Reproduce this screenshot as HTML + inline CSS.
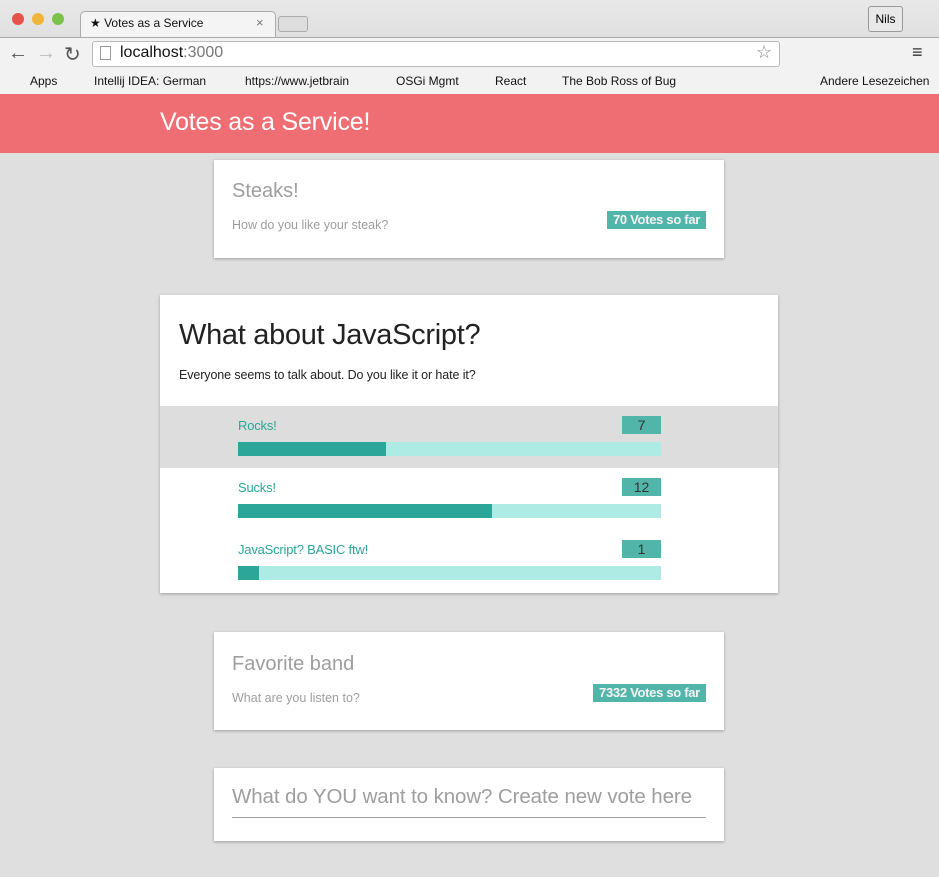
<!DOCTYPE html>
<html><head><meta charset="utf-8"><style>
*{margin:0;padding:0;box-sizing:border-box}
body{width:939px;height:877px;overflow:hidden;background:#dfdfdf;font-family:"Liberation Sans",Arial,sans-serif;position:relative}
.a{position:absolute;white-space:nowrap}
.chrome{left:0;top:0;width:939px;height:94px;background:linear-gradient(#e8e8e8,#d4d4d4)}
.card{position:absolute;background:#fff;box-shadow:0 1px 3px rgba(0,0,0,.3)}
.gt{color:#9e9e9e}
.badge{position:absolute;background:#52b5a9;color:#f4f4f4;font-size:13px;font-weight:bold;text-align:center;line-height:18px;white-space:nowrap;letter-spacing:-0.3px}
.bar{position:absolute;left:78px;width:423px;height:14px;background:#aeebe5}
.bar i{display:block;height:14px;background:#2ba698}
.lbl{position:absolute;left:78px;color:#2ba698;font-size:13px;letter-spacing:-0.2px}
.cnt{position:absolute;left:462px;width:39px;height:18px;background:#52b5a9;color:#333;font-size:14px;text-align:center;line-height:18px}
</style></head><body>
<div class="a chrome"></div>
<div class="a" style="left:12px;top:13px;width:12px;height:12px;border-radius:50%;background:#e9514b"></div>
<div class="a" style="left:32px;top:13px;width:12px;height:12px;border-radius:50%;background:#f0b53a"></div>
<div class="a" style="left:52px;top:13px;width:12px;height:12px;border-radius:50%;background:#7cc24a"></div>
<div class="a" style="left:80px;top:11px;width:196px;height:27px;background:#f4f4f4;border:1px solid #aaa;border-bottom:none;border-radius:5px 5px 0 0"></div>
<div class="a" style="left:90px;top:16px;font-size:12px;color:#111">★ Votes as a Service</div>
<div class="a" style="left:256px;top:15px;font-size:13px;color:#777">×</div>
<div class="a" style="left:278px;top:16px;width:30px;height:16px;border:1px solid #aaa;border-radius:3px;background:#ddd"></div>
<div class="a" style="left:868px;top:6px;width:35px;height:26px;border:1px solid #999;border-radius:3px;font-size:12px;line-height:24px;text-align:center;background:#e8e8e8">Nils</div>
<div class="a" style="left:0;top:37px;width:939px;height:57px;background:#f2f2f2;border-top:1px solid #aaa"></div>
<div class="a" style="left:8px;top:42px;font-size:20px;color:#555">←</div>
<div class="a" style="left:36px;top:42px;font-size:20px;color:#bbb">→</div>
<div class="a" style="left:64px;top:42px;font-size:20px;color:#555">↻</div>
<div class="a" style="left:92px;top:41px;width:688px;height:26px;background:#fff;border:1px solid #bbb;border-radius:3px"></div>
<div class="a" style="left:100px;top:46px;width:11px;height:14px;border:1px solid #999;background:#fff"></div>
<div class="a" style="left:120px;top:44px;font-size:16px;color:#111">localhost<span style="color:#777">:3000</span></div>
<div class="a" style="left:756px;top:42px;font-size:18px;color:#888">☆</div>
<div class="a" style="left:912px;top:42px;font-size:18px;color:#333">≡</div>
<div class="a" style="left:0;top:72px;width:939px;font-size:12px;color:#111">
<span class="a" style="left:30px;top:2px">Apps</span><span class="a" style="left:94px;top:2px">Intellij IDEA: German</span><span class="a" style="left:245px;top:2px">https://www.jetbrain</span><span class="a" style="left:396px;top:2px">OSGi Mgmt</span><span class="a" style="left:495px;top:2px">React</span><span class="a" style="left:562px;top:2px">The Bob Ross of Bug</span><span class="a" style="left:820px;top:2px">Andere Lesezeichen</span></div>
<div class="a" style="left:0;top:94px;width:939px;height:59px;background:#ee6e73"></div>
<div class="a" style="left:160px;top:108px;font-size:25px;color:#fff;letter-spacing:-0.2px">Votes as a Service!</div>

<div class="card" style="left:214px;top:160px;width:510px;height:98px">
<div class="a gt" style="left:18px;top:20px;font-size:20px">Steaks!</div>
<div class="a gt" style="left:18px;top:58px;font-size:12.5px">How do you like your steak?</div>
<div class="badge" style="left:393px;top:51px;width:99px">70 Votes so far</div>
</div>

<div class="card" style="left:160px;top:295px;width:618px;height:298px">
<div class="a" style="left:19px;top:24px;font-size:29px;color:#222;letter-spacing:-0.3px">What about JavaScript?</div>
<div class="a" style="left:19px;top:73px;font-size:12.5px;color:#222;letter-spacing:-0.1px">Everyone seems to talk about. Do you like it or hate it?</div>
<div class="a" style="left:0;top:111px;width:618px;height:62px;background:#dddddd"></div>
<div class="lbl" style="top:123px">Rocks!</div><div class="cnt" style="top:121px">7</div>
<div class="bar" style="top:147px"><i style="width:148px"></i></div>
<div class="lbl" style="top:185px">Sucks!</div><div class="cnt" style="top:183px">12</div>
<div class="bar" style="top:209px"><i style="width:254px"></i></div>
<div class="lbl" style="top:247px">JavaScript? BASIC ftw!</div><div class="cnt" style="top:245px">1</div>
<div class="bar" style="top:271px"><i style="width:21px"></i></div>
</div>

<div class="card" style="left:214px;top:632px;width:510px;height:98px">
<div class="a gt" style="left:18px;top:21px;font-size:20px">Favorite band</div>
<div class="a gt" style="left:18px;top:59px;font-size:12.5px">What are you listen to?</div>
<div class="badge" style="left:379px;top:52px;width:113px">7332 Votes so far</div>
</div>

<div class="card" style="left:214px;top:768px;width:510px;height:73px">
<div class="a gt" style="left:18px;top:17px;font-size:20.5px;letter-spacing:-0.1px">What do YOU want to know? Create new vote here</div>
<div class="a" style="left:18px;top:49px;width:474px;height:1px;background:#9e9e9e"></div>
</div>
</body></html>
